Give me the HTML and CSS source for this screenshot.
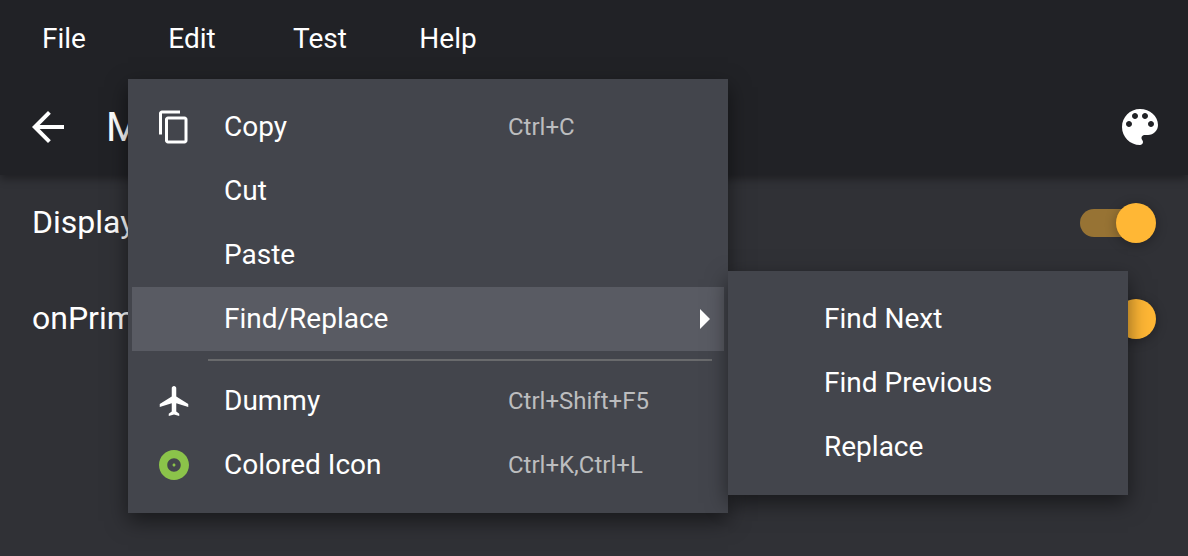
FILE: index.html
```html
<!DOCTYPE html>
<html lang="en">
<head>
<meta charset="utf-8">
<meta name="viewport" content="width=device-width, initial-scale=1">
<title>Menu</title>
<link rel="stylesheet" href="styles.css">
</head>
<body>
<header class="app-header">
  <nav class="menubar" aria-label="Main menu">
    <button class="menubar-item" type="button">File</button>
    <div class="menubar-slot">
      <button class="menubar-item" type="button" aria-haspopup="true" aria-expanded="true">Edit</button>
      <div class="menu edit-menu" role="menu" aria-label="Edit">
        <button class="menu-item" type="button" role="menuitem">
          <svg class="icon" viewBox="0 0 24 24" aria-hidden="true"><path d="M16 1H4c-1.100 0-2 .9-2 2v14h2V3h12V1zm3 4H8c-1.100 0-2 .9-2 2v14c0 1.100.9 2 2 2h11c1.100 0 2-.9 2-2V7c0-1.100-.9-2-2-2zm0 16H8V7h11v14z"/></svg>
          <span class="label">Copy</span><kbd class="shortcut">Ctrl+C</kbd>
        </button>
        <button class="menu-item" type="button" role="menuitem"><span class="label">Cut</span></button>
        <button class="menu-item" type="button" role="menuitem"><span class="label">Paste</span></button>
        <div class="submenu-slot">
          <button class="menu-item highlighted" type="button" role="menuitem" aria-haspopup="true" aria-expanded="true">
            <span class="label">Find/Replace</span>
            <svg class="submenu-arrow" viewBox="0 0 10 20" aria-hidden="true"><path d="M0 0l10 10L0 20z"/></svg>
          </button>
          <div class="menu submenu" role="menu" aria-label="Find/Replace">
            <button class="menu-item" type="button" role="menuitem"><span class="label">Find Next</span></button>
            <button class="menu-item" type="button" role="menuitem"><span class="label">Find Previous</span></button>
            <button class="menu-item" type="button" role="menuitem"><span class="label">Replace</span></button>
          </div>
        </div>
        <hr class="separator">
        <button class="menu-item" type="button" role="menuitem">
          <svg class="icon" viewBox="0 0 24 24" aria-hidden="true"><path d="M21.500 16v-2l-8-5V3.500c0-.83-.67-1.500-1.500-1.500s-1.500.67-1.500 1.500V9l-8 5v2l8-2.500V19l-2 1.500V22l3.500-1 3.500 1v-1.500l-2-1.500v-5.500l8 2.500z"/></svg>
          <span class="label">Dummy</span><kbd class="shortcut">Ctrl+Shift+F5</kbd>
        </button>
        <button class="menu-item" type="button" role="menuitem">
          <svg class="icon green" viewBox="0 0 24 24" aria-hidden="true"><path d="M12 2C6.480 2 2 6.480 2 12s4.480 10 10 10 10-4.480 10-10S17.520 2 12 2zm0 14.500c-2.490 0-4.500-2.010-4.500-4.500S9.510 7.500 12 7.500s4.500 2.010 4.500 4.500-2.010 4.500-4.500 4.500zm0-5.500c-.55 0-1 .45-1 1s.45 1 1 1 1-.45 1-1-.45-1-1-1z"/></svg>
          <span class="label">Colored Icon</span><kbd class="shortcut">Ctrl+K,Ctrl+L</kbd>
        </button>
      </div>
    </div>
    <button class="menubar-item" type="button">Test</button>
    <button class="menubar-item" type="button">Help</button>
  </nav>
  <div class="toolbar">
    <button class="tool-button" type="button" aria-label="Back">
      <svg viewBox="0 0 24 24" aria-hidden="true"><path d="M20 11H7.830l5.590-5.590L12 4l-8 8 8 8 1.410-1.410L7.830 13H20v-2z"/></svg>
    </button>
    <h1 class="title">Menu</h1>
    <button class="tool-button palette" type="button" aria-label="Palette">
      <svg viewBox="0 0 24 24" aria-hidden="true"><path d="M12 3c-4.970 0-9 4.030-9 9s4.030 9 9 9c.83 0 1.500-.67 1.500-1.500 0-.39-.15-.74-.39-1.010-.23-.26-.38-.61-.38-.99 0-.83.67-1.500 1.500-1.500H16c2.760 0 5-2.240 5-5 0-4.420-4.030-8-9-8zm-5.500 9c-.83 0-1.500-.67-1.500-1.500S5.670 9 6.500 9 8 9.670 8 10.500 7.330 12 6.500 12zm3-4C8.670 8 8 7.330 8 6.500S8.670 5 9.500 5s1.500.67 1.500 1.500S10.330 8 9.500 8zm5 0c-.83 0-1.500-.67-1.500-1.500S13.670 5 14.500 5s1.500.67 1.500 1.500S15.330 8 14.500 8zm3 4c-.83 0-1.500-.67-1.500-1.500S16.670 9 17.500 9s1.500.67 1.500 1.500-.67 1.500-1.500 1.500z"/></svg>
    </button>
  </div>
</header>
<main class="settings">
  <label class="setting"><span>Display</span><input class="switch" type="checkbox" role="switch" checked></label>
  <label class="setting"><span>onPrim</span><input class="switch" type="checkbox" role="switch" checked></label>
</main>
</body>
</html>
```
FILE: styles.css
```css
* {
  box-sizing: border-box;
}

body {
  margin: 0;
  min-height: 100vh;
  background: #303136;
  color: #fff;
  font-family: Roboto, sans-serif;
  font-size: 28px;
}

button {
  padding: 0;
  border: 0;
  background: none;
  color: inherit;
  font: inherit;
}

svg {
  display: block;
  fill: currentColor;
}

.app-header {
  position: relative;
  z-index: 1;
  background: #212226;
  box-shadow: 0 4px 8px rgba(0, 0, 0, 0.35);
}

.menubar {
  display: flex;
}

.menubar-slot {
  position: relative;
}

.menubar-item {
  width: 128px;
  height: 79px;
  padding-bottom: 2px;
}

.toolbar {
  display: flex;
  align-items: center;
  height: 96px;
  padding: 0 24px;
}

.tool-button svg {
  width: 48px;
  height: 48px;
}

.title {
  flex: 1;
  margin: 0 0 0 34px;
  font-size: 40px;
  font-weight: 400;
}

.setting {
  display: flex;
  align-items: center;
  justify-content: space-between;
  height: 96px;
  padding: 0 32px;
  font-size: 32px;
}

.setting span {
  padding-bottom: 2px;
}

.switch {
  position: relative;
  width: 76px;
  height: 40px;
  margin: 0;
  appearance: none;
}

.switch::before {
  content: "";
  position: absolute;
  inset: 6px 4px 6px 0;
  border-radius: 14px;
  background: #977334;
}

.switch::after {
  content: "";
  position: absolute;
  top: 0;
  right: 0;
  width: 40px;
  height: 40px;
  border-radius: 50%;
  background: #ffb735;
  box-shadow: 0 2px 12px rgba(0, 0, 0, 0.3);
}

.menu {
  position: absolute;
  padding: 16px 4px;
  background: #43454c;
  box-shadow: 0 8px 20px rgba(0, 0, 0, 0.5);
}

.edit-menu {
  top: 100%;
  left: 0;
  z-index: 2;
  width: 600px;
}

.submenu-slot {
  position: relative;
}

.submenu {
  top: -16px;
  left: calc(100% + 4px);
  width: 400px;
}

.menu-item {
  display: grid;
  grid-template-columns: 36px 252px 1fr auto;
  column-gap: 32px;
  align-items: center;
  width: 100%;
  height: 64px;
  padding: 0 14px 0 24px;
  text-align: left;
}

.highlighted {
  background: #595b63;
}

.icon {
  width: 36px;
  height: 36px;
}

.green {
  color: #8bc34a;
}

.label {
  grid-column: 2;
  padding-bottom: 2px;
  white-space: nowrap;
}

.shortcut {
  color: #bcbdbf;
  font-family: inherit;
  font-size: 24px;
}

.submenu-arrow {
  grid-column: 4;
  width: 10px;
  height: 20px;
}

.separator {
  height: 2px;
  margin: 8px 12px 8px 76px;
  border: 0;
  background: #696a6c;
}
```
